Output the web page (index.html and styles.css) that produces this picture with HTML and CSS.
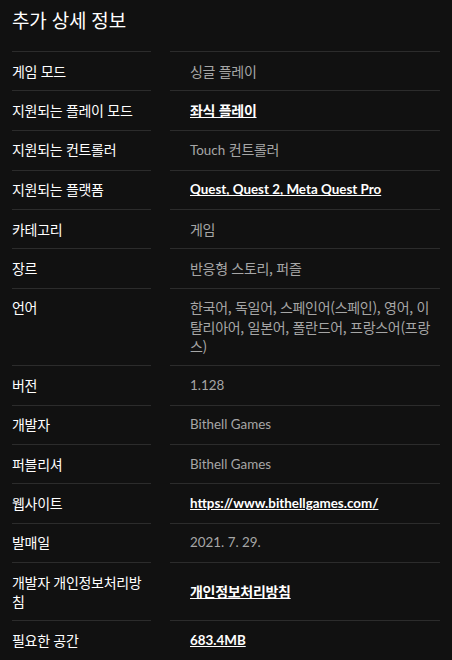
FILE: index.html
```html
<!DOCTYPE html>
<html lang="ko">

<head>
    <meta charset="utf-8">
    <meta name="viewport" content="width=device-width, initial-scale=1.0">
    <title>추가 상세 정보</title>
    <link rel="stylesheet" href="styles.css">
</head>

<body>

    <section class="details">
        <h2>추가 상세 정보</h2>

        <dl>
            <dt>게임 모드</dt>
            <dd>싱글 플레이</dd>

            <dt>지원되는 플레이 모드</dt>
            <dd><a href="#">좌식 플레이</a></dd>

            <dt>지원되는 컨트롤러</dt>
            <dd><span class="en">Touch</span> 컨트롤러</dd>

            <dt>지원되는 플랫폼</dt>
            <dd class="en"><a href="#">Quest, Quest 2, Meta Quest Pro</a></dd>

            <dt>카테고리</dt>
            <dd>게임</dd>

            <dt>장르</dt>
            <dd>반응형 스토리, 퍼즐</dd>

            <dt>언어</dt>
            <dd>한국어, 독일어, 스페인어(스페인), 영어, 이탈리아어, 일본어, 폴란드어, 프랑스어(프랑스)</dd>

            <dt>버전</dt>
            <dd class="en">1.128</dd>

            <dt>개발자</dt>
            <dd class="en">Bithell Games</dd>

            <dt>퍼블리셔</dt>
            <dd class="en">Bithell Games</dd>

            <dt>웹사이트</dt>
            <dd class="en"><a href="#">https://www.bithellgames.com/</a></dd>

            <dt>발매일</dt>
            <dd class="en">2021. 7. 29.</dd>

            <dt>개발자 개인정보처리방침</dt>
            <dd class="middle"><a href="#">개인정보처리방침</a></dd>

            <dt>필요한 공간</dt>
            <dd class="en"><a href="#">683.4MB</a></dd>
        </dl>
    </section>

</body>

</html>
```

FILE: styles.css
```css
* {
    box-sizing: border-box;
}

body {
    margin: 0;
    background: #111111;
    color: #ffffff;
    font-family: "Noto Sans CJK KR", sans-serif;
}

.details {
    padding: 0 12px;
}

h2 {
    margin: 0;
    padding: 8px 0 19px;
    font-size: 19px;
    line-height: 24px;
    font-weight: normal;
    letter-spacing: -0.2px;
}

dl {
    margin: 0;
    display: grid;
    grid-template-columns: 139px 1fr;
    column-gap: 19px;
}

dt,
dd {
    margin: 0;
    padding: 9.55px 0;
    border-top: 1px solid #2c2c2c;
    font-size: 14px;
    line-height: 19.2px;
    letter-spacing: -0.3px;
}

dd {
    padding-left: 20px;
    color: #a6a6a6;
}

dd.middle {
    display: flex;
    align-items: center;
}

.en {
    font-family: "Lato", "Noto Sans CJK KR", sans-serif;
    font-size: 13.4px;
    letter-spacing: 0;
}

dd a {
    color: #ffffff;
    font-weight: bold;
}
```
